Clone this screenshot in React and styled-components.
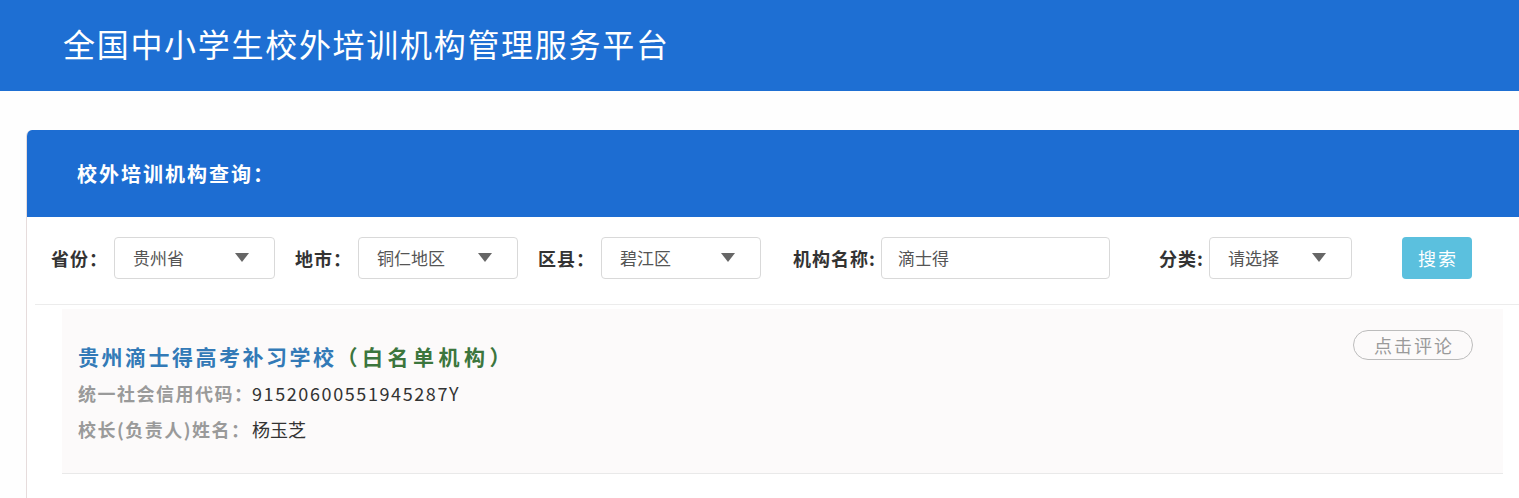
import React from 'react';
import styled, { createGlobalStyle } from 'styled-components';

const GlobalStyle = createGlobalStyle`
  html, body {
    margin: 0;
    padding: 0;
    background: #fefefe;
    font-family: "Noto Sans CJK SC", "Noto Sans", sans-serif;
  }
  * { box-sizing: border-box; }
`;

const TopBar = styled.header`
  height: 91px;
  background: #1e6fd3;
  display: flex;
  align-items: center;
  padding: 0 0 5px 63px;
`;

const SiteTitle = styled.h1`
  margin: 0;
  font-size: 32px;
  font-weight: 400;
  color: #fff;
  letter-spacing: 1.7px;
`;

const Main = styled.main`
  padding: 39px 0 0 26px;
`;

const Card = styled.section`
  border-left: 1px solid #e6dcdc;
  border-top-left-radius: 6px;
  overflow: hidden;
  background: #fff;
  min-height: 368px;
`;

const CardHead = styled.div`
  height: 87px;
  background: #1d6dd2;
  display: flex;
  align-items: center;
  padding-left: 50px;
  font-size: 20px;
  font-weight: 700;
  color: #fff;
  letter-spacing: 2px;
`;

const FilterBar = styled.div`
  height: 88px;
  display: flex;
  align-items: center;
  padding: 0 0 6px 16px;
  border-bottom: 1px solid #ececec;
  margin-left: 8px;
`;

const Field = styled.div`
  display: flex;
  align-items: center;
  margin-left: ${(p) => p.$offset || 0}px;
`;

const Label = styled.span`
  width: ${(p) => p.$width}px;
  font-size: 18px;
  font-weight: 700;
  color: #333;
  letter-spacing: 1px;
  white-space: nowrap;
`;

const SelectBox = styled.div`
  width: ${(p) => p.$width}px;
  height: 42px;
  border: 1px solid #d9d9d9;
  border-radius: 4px;
  display: flex;
  align-items: center;
  justify-content: space-between;
  padding: 0 25px 0 18px;
  font-size: 17px;
  color: #555;
  background: #fff;
`;

const Arrow = styled.span`
  width: 0;
  height: 0;
  border-left: 7px solid transparent;
  border-right: 7px solid transparent;
  border-top: 9px solid #666;
`;

const TextInput = styled.div`
  width: ${(p) => p.$width}px;
  height: 42px;
  border: 1px solid #d9d9d9;
  border-radius: 4px;
  display: flex;
  align-items: center;
  padding-left: 16px;
  font-size: 17px;
  color: #555;
`;

const SearchButton = styled.button`
  margin-left: 50px;
  width: 70px;
  height: 42px;
  border: none;
  border-radius: 4px;
  background: #5bc0de;
  color: #fff;
  font-family: inherit;
  font-size: 18px;
  letter-spacing: 2px;
  padding: 0 0 0 2px;
`;

const ResultItem = styled.div`
  margin: 4px 16px 0 35px;
  padding: 21px 30px 26px 16px;
  background: #fcfafa;
  border-bottom: 1px solid #e9e9e9;
  display: flex;
  justify-content: space-between;
  align-items: flex-start;
`;

const Info = styled.div`
  padding-top: 11px;
`;

const TitleLine = styled.div`
  margin-bottom: 4px;
`;

const OrgName = styled.span`
  font-size: 21px;
  font-weight: 700;
  line-height: 30px;
  letter-spacing: ${(p) => p.$spacing}px;
  color: ${(p) => p.$color};
`;

const InfoRow = styled.div`
  line-height: 36px;
  font-size: 18px;
  display: flex;
`;

const InfoLabel = styled.span`
  color: #9a9a9a;
  font-weight: 700;
  letter-spacing: 1.5px;
  width: 174px;
  white-space: nowrap;
`;

const InfoValue = styled.span`
  color: #333;
  letter-spacing: ${(p) => p.$spacing || 0}px;
`;

const CommentPill = styled.button`
  width: 120px;
  height: 30px;
  border: 1px solid #bcbcbc;
  border-radius: 15px;
  background: transparent;
  color: #9a9a9a;
  font-family: inherit;
  font-size: 18px;
  letter-spacing: 2px;
  padding: 0 0 0 2px;
`;

const Select = ({ width, value }) => (
  <SelectBox $width={width}>
    <span>{value}</span>
    <Arrow />
  </SelectBox>
);

export default function App() {
  return (
    <>
      <GlobalStyle />
      <TopBar>
        <SiteTitle>全国中小学生校外培训机构管理服务平台</SiteTitle>
      </TopBar>
      <Main>
        <Card>
          <CardHead>校外培训机构查询：</CardHead>
          <FilterBar>
            <Field>
              <Label $width={63}>省份：</Label>
              <Select width={161} value="贵州省" />
            </Field>
            <Field $offset={20}>
              <Label $width={63}>地市：</Label>
              <Select width={160} value="铜仁地区" />
            </Field>
            <Field $offset={20}>
              <Label $width={63}>区县：</Label>
              <Select width={160} value="碧江区" />
            </Field>
            <Field $offset={32}>
              <Label $width={88}>机构名称:</Label>
              <TextInput $width={229}>滴士得</TextInput>
            </Field>
            <Field $offset={49}>
              <Label $width={50}>分类:</Label>
              <Select width={143} value="请选择" />
            </Field>
            <SearchButton>搜索</SearchButton>
          </FilterBar>
          <ResultItem>
            <Info>
              <TitleLine>
                <OrgName $color="#337ab7" $spacing={2.5}>贵州滴士得高考补习学校</OrgName>
                <OrgName $color="#3c763d" $spacing={4.5}>（白名单机构）</OrgName>
              </TitleLine>
              <InfoRow>
                <InfoLabel>统一社会信用代码：</InfoLabel>
                <InfoValue $spacing={1.6}>91520600551945287Y</InfoValue>
              </InfoRow>
              <InfoRow>
                <InfoLabel>校长(负责人)姓名：</InfoLabel>
                <InfoValue>杨玉芝</InfoValue>
              </InfoRow>
            </Info>
            <CommentPill>点击评论</CommentPill>
          </ResultItem>
        </Card>
      </Main>
    </>
  );
}
